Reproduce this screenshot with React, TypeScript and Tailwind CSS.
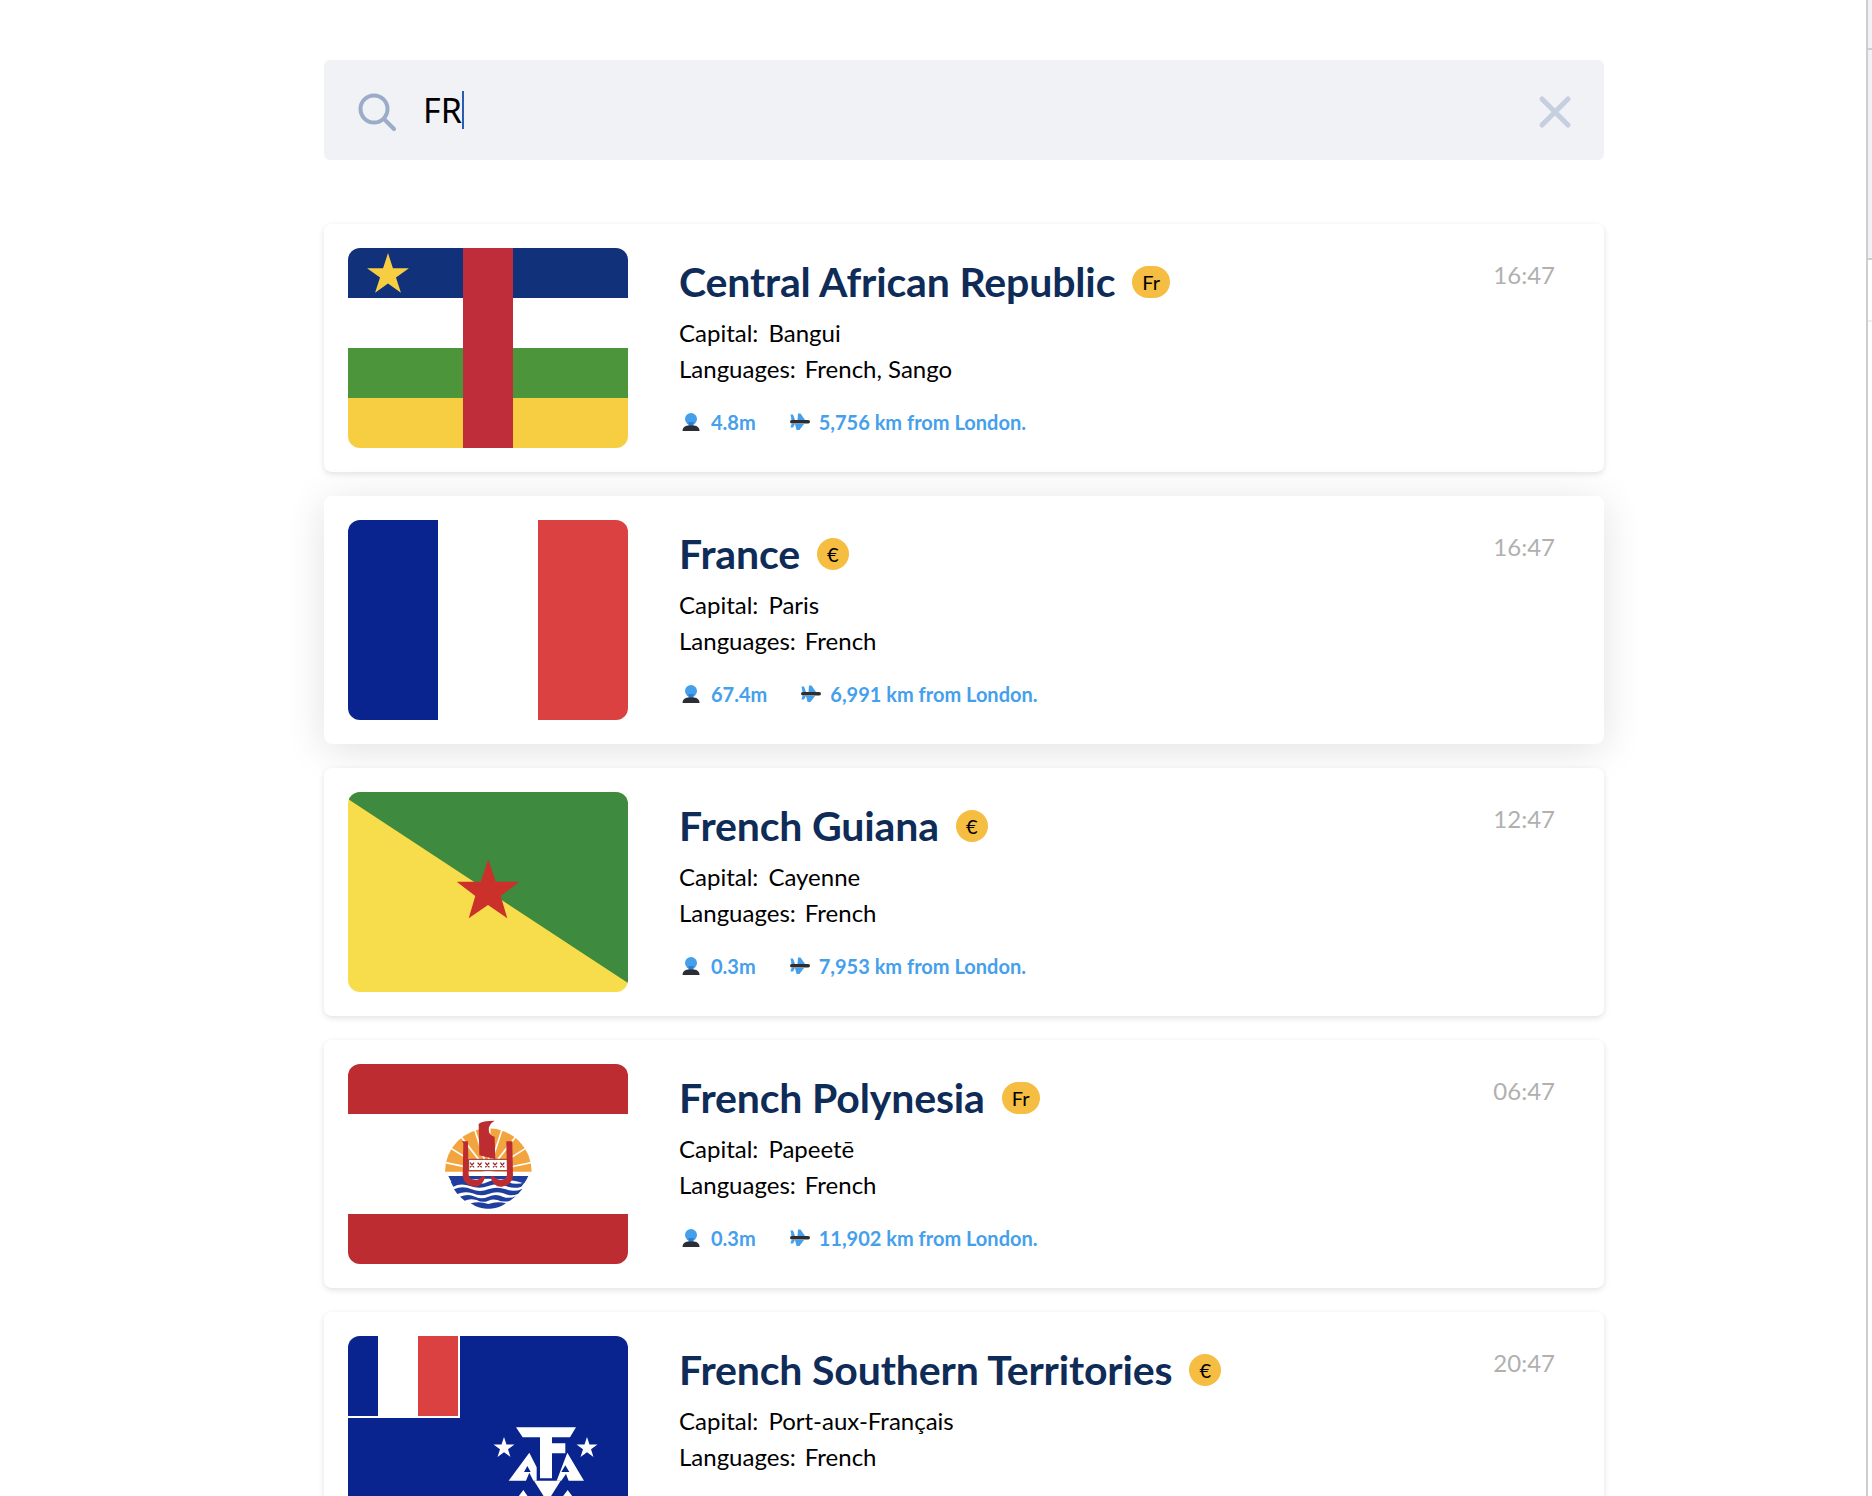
import React from "react";

function Star({ cx, cy, r, fill }: { cx: number; cy: number; r: number; fill: string }) {
  const pts: string[] = [];
  for (let i = 0; i < 10; i++) {
    const rad = i % 2 === 0 ? r : r * 0.382;
    const a = (-90 + i * 36) * (Math.PI / 180);
    pts.push(`${(cx + rad * Math.cos(a)).toFixed(2)},${(cy + rad * Math.sin(a)).toFixed(2)}`);
  }
  return <polygon points={pts.join(" ")} fill={fill} />;
}

function FlagSvg({ children }: { children: React.ReactNode }) {
  return (
    <svg viewBox="0 0 280 200" width={280} height={200} className="block rounded-xl shrink-0">
      {children}
    </svg>
  );
}

function CafFlag() {
  return (
    <FlagSvg>
      <rect width="280" height="50" fill="#11317b" />
      <rect y="50" width="280" height="50" fill="#ffffff" />
      <rect y="100" width="280" height="50" fill="#4d953a" />
      <rect y="150" width="280" height="50" fill="#f7ce42" />
      <rect x="115" width="50" height="200" fill="#bf2d3a" />
      <Star cx={40} cy={27} r={22} fill="#f7ce42" />
    </FlagSvg>
  );
}

function FranceFlag() {
  return (
    <FlagSvg>
      <rect width="90" height="200" fill="#0a248f" />
      <rect x="90" width="100" height="200" fill="#ffffff" />
      <rect x="190" width="90" height="200" fill="#dc4141" />
    </FlagSvg>
  );
}

function GuianaFlag() {
  return (
    <FlagSvg>
      <rect width="280" height="200" fill="#f7dd4b" />
      <polygon points="0,7 0,0 280,0 280,191" fill="#3e8a3e" />
      <polygon
        points="140.3,67.3 147.7,89.7 171.3,89.7 152.7,104 159.3,126.3 140,113 120.7,126.3 127.3,104 108.7,89.7 132.7,89.7"
        fill="#cb302a"
      />
    </FlagSvg>
  );
}

function PolynesiaFlag() {
  const rays = [-78, -58, -38, -18, 2, 18, 38, 58, 78];
  return (
    <FlagSvg>
      <rect width="280" height="200" fill="#ffffff" />
      <rect width="280" height="50" fill="#bd2c30" />
      <rect y="150" width="280" height="50" fill="#bd2c30" />
      <g transform="translate(72 36) scale(0.3333)">
        <path d="M75 215 A130 130 0 0 1 335 215 Z" fill="#f2a53f" />
        {rays.map((a) => (
          <line
            key={a}
            x1="205"
            y1="215"
            x2={205 + 160 * Math.sin((a * Math.PI) / 180)}
            y2={215 - 160 * Math.cos((a * Math.PI) / 180)}
            stroke="#ffffff"
            strokeWidth="5"
          />
        ))}
        <path d="M85 228 H325 Q320 240 312 250 Q268 236 205 236 Q142 236 98 250 Q90 240 85 228Z" fill="#1f3e9e" />
        <path d="M92 245 Q120 232 150 245 Q178 258 205 245 Q232 232 262 245 Q290 258 315 245 L304 260 Q280 268 258 258 Q232 248 205 258 Q178 268 150 258 Q122 248 100 260Z" fill="#1f3e9e" />
        <path d="M102 268 Q128 256 155 268 Q180 278 205 268 Q230 258 258 268 Q282 278 308 266 L294 282 Q270 290 250 280 Q228 272 205 282 Q180 290 158 280 Q134 272 112 282Z" fill="#1f3e9e" />
        <path d="M120 290 Q145 280 165 290 Q185 300 205 290 Q228 280 248 290 Q268 298 288 288 L270 302 Q250 308 232 300 Q218 296 205 302 Q188 310 170 300 Q150 294 134 302Z" fill="#1f3e9e" />
        <path d="M152 310 Q178 302 205 312 Q232 302 258 310 Q232 328 205 326 Q178 328 152 310Z" fill="#1f3e9e" />
        <rect x="146" y="178" width="118" height="34" fill="#ffffff" stroke="#9a2a2e" strokeWidth="3" />
        <path d="M150 188 l12 14 m0 -14 l-12 14 M173 188 l12 14 m0 -14 l-12 14 M196 188 l12 14 m0 -14 l-12 14 M219 188 l12 14 m0 -14 l-12 14 M241 188 l12 14 m0 -14 l-12 14" stroke="#9a2a2e" strokeWidth="4" fill="none" />
        <path d="M176 72 Q186 62 224 62 Q204 74 206 92 Q208 106 224 110 L226 178 L178 166Z" fill="#bd2c30" />
        <path d="M126 124 H144 V130 L146 225 Q150 240 166 240 Q178 240 186 228 L196 230 Q186 262 162 260 Q132 256 128 228 L130 130Z" fill="#bd2c30" />
        <path d="M259 124 H277 V130 L279 228 Q275 256 245 260 Q221 262 211 230 L221 228 Q229 240 241 240 Q257 240 261 225 L259 130Z" fill="#bd2c30" />
      </g>
    </FlagSvg>
  );
}

function TaafFlag() {
  return (
    <FlagSvg>
      <rect width="280" height="200" fill="#0a248f" />
      <rect width="112" height="82" fill="#ffffff" />
      <rect width="30" height="80" fill="#0a248f" />
      <rect x="70" width="40" height="80" fill="#dc4141" />
      <g transform="translate(142 74) scale(0.3333)" fill="#ffffff">
        <path d="M78 52 H258 L240 82 H186 V100 H226 L226 130 H186 V205 H150 V82 H98Z" />
        <path d="M118 128 L140 172 V212 H172 L130 212 L118 188 L108 212 H56 Z" />
        <path d="M200 212 L232 128 L282 212 H236 L228 192 L214 212Z" />
        <path d="M132 212 H212 L172 276Z" />
        <path d="M85 260 L100 240 L114 260Z M218 260 L233 240 L248 260Z" />
        <polygon fill="#0a248f" points="112,168 122,186 102,186" />
        <polygon fill="#0a248f" points="226,166 238,186 214,186" />
      </g>
      <Star cx={156} cy={112} r={11} fill="#ffffff" />
      <Star cx={239} cy={112} r={11} fill="#ffffff" />
    </FlagSvg>
  );
}

function PersonIcon() {
  return (
    <svg width="20" height="20" viewBox="0 0 20 20" className="shrink-0">
      <circle cx="10" cy="7" r="6" fill="#45a0ec" />
      <rect x="7.5" y="10" width="5" height="4" fill="#2f7fd0" />
      <path d="M1.5 19 Q1.5 14 7 13.5 H13 Q18.5 14 18.5 19Z" fill="#2b2f33" />
    </svg>
  );
}

function PlaneIcon() {
  return (
    <svg width="20" height="18" viewBox="0 0 20 18" className="block shrink-0">
      <path d="M8 0.5 H10.5 L15 7 H7.5 Z" fill="#45a0ec" />
      <path d="M5 11 H14 L9.5 17 H6.5 Z" fill="#45a0ec" />
      <path d="M0.5 1.5 H3 L5 7 H1.5 Z M1.5 11 H5 L3 14.5 H0.5 Z" fill="#45a0ec" />
      <rect x="0" y="7" width="20" height="3.6" rx="1.8" fill="#2b2f33" />
    </svg>
  );
}

const countries = [
  { name: "Central African Republic", badge: "Fr", capital: "Bangui", languages: "French, Sango", pop: "4.8m", dist: "5,756", time: "16:47", Flag: CafFlag, hover: false },
  { name: "France", badge: "€", capital: "Paris", languages: "French", pop: "67.4m", dist: "6,991", time: "16:47", Flag: FranceFlag, hover: true },
  { name: "French Guiana", badge: "€", capital: "Cayenne", languages: "French", pop: "0.3m", dist: "7,953", time: "12:47", Flag: GuianaFlag, hover: false },
  { name: "French Polynesia", badge: "Fr", capital: "Papeetē", languages: "French", pop: "0.3m", dist: "11,902", time: "06:47", Flag: PolynesiaFlag, hover: false },
  { name: "French Southern Territories", badge: "€", capital: "Port-aux-Français", languages: "French", pop: "", dist: "", time: "20:47", Flag: TaafFlag, hover: false },
];

export default function App() {
  return (
    <div className="relative h-[1496px] overflow-hidden bg-white font-['Lato',sans-serif]">
      <div className="ml-[324px] w-[1280px] pt-[60px]">
        <div className="flex h-[100px] items-center rounded-md bg-[#f0f2f6] pl-[32px] pr-[32px]">
          <svg width="42" height="42" viewBox="0 0 42 42" className="mt-[6px] shrink-0">
            <circle cx="18" cy="17" r="13.5" fill="none" stroke="#9bacc8" strokeWidth="4" />
            <line x1="28" y1="27" x2="38" y2="37" stroke="#9bacc8" strokeWidth="4" strokeLinecap="round" />
          </svg>
          <div className="ml-[25px] flex items-center">
            <span className="font-['Noto_Sans',sans-serif] text-[34px] leading-[38px] text-black">FR</span>
            <span className="h-[38px] w-[2px] bg-[#2a5db0]" />
          </div>
          <svg width="34" height="34" viewBox="0 0 34 34" className="ml-auto mt-[4px] shrink-0">
            <path d="M4 4 L30 30 M30 4 L4 30" stroke="#c5cfe0" strokeWidth="5" strokeLinecap="round" />
          </svg>
        </div>

        <div className="mt-[64px] flex flex-col gap-6">
          {countries.map(({ name, badge, capital, languages, pop, dist, time, Flag, hover }) => (
            <div
              key={name}
              className={
                hover
                  ? "flex h-[248px] rounded-lg bg-white p-6 shadow-[0_6px_40px_rgba(0,0,0,0.12)]"
                  : "flex h-[248px] rounded-lg bg-white p-6 shadow-[0_2px_6px_rgba(0,0,0,0.12)]"
              }
            >
              <Flag />
              <div className="ml-[51px] flex-1 pt-[8px]">
                <div className="flex h-[48px] items-center pt-[3px]">
                  <span className="text-[41px] font-bold leading-[48px] tracking-[-0.15px] text-[#0f2c58]">{name}</span>
                  <span className="ml-[17px] flex h-[32px] min-w-[32px] items-center justify-center rounded-full bg-[#f5bd41] px-[10px] text-[20px] leading-none text-black">
                    {badge}
                  </span>
                </div>
                <div className="mt-[11px] text-[24px] leading-[36px] text-black">
                  <div><span className="mr-[10px]">Capital:</span>{capital}</div>
                  <div><span className="mr-[9px]">Languages:</span>{languages}</div>
                </div>
                {pop && (
                  <div className="ml-[2px] mt-[20px] flex items-center text-[20px] font-bold leading-[30px] text-[#45a0ec]">
                    <PersonIcon />
                    <span className="ml-[10px]">{pop}</span>
                    <span className="ml-[34px]"><PlaneIcon /></span>
                    <span className="ml-[9px]">{dist} km from London.</span>
                  </div>
                )}
              </div>
              <div className="mr-[25px] mt-[9px] text-[24px] leading-[36px] text-[#b0b0b0]">{time}</div>
            </div>
          ))}
        </div>
      </div>

      <div className="absolute inset-y-0 left-[1866px] w-[6px] border-l-2 border-[#cdcdd2] bg-white">
        <div className="h-[48px] bg-[#f1f2f4]" />
        <div className="h-[2px] bg-[#cdcdd2]" />
        <div className="h-[208px] bg-[#f1f2f4]" />
        <div className="h-[2px] bg-[#cdcdd2]" />
        <div className="mt-[60px] h-[2px] bg-[#eeeeee]" />
      </div>
    </div>
  );
}
